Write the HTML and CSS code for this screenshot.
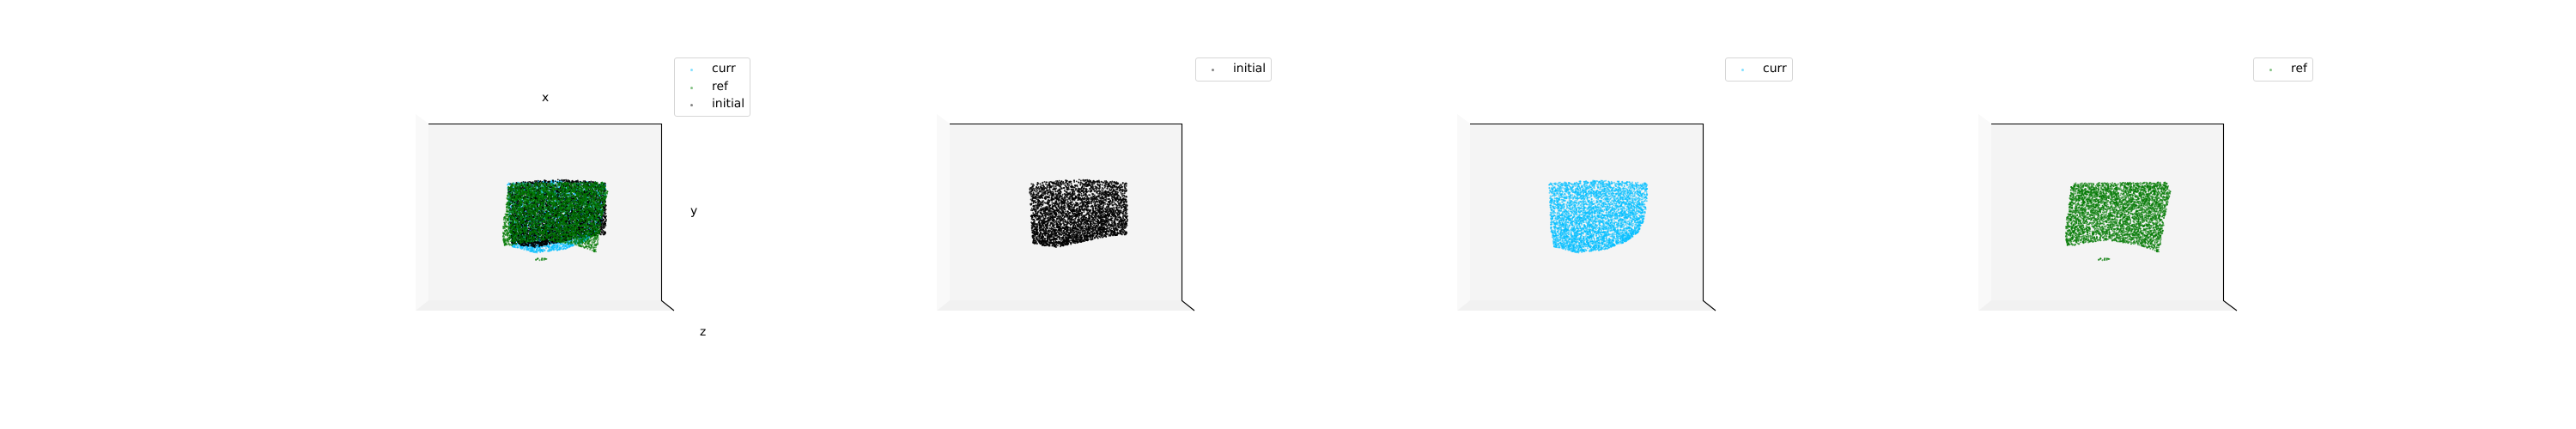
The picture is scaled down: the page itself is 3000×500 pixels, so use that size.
FILE: index.html
```html
<!DOCTYPE html>
<html lang="en">
<head>
<meta charset="utf-8">
<title>Point clouds</title>
<link rel="stylesheet" href="styles.css">
</head>
<body>
<main class="figure">
  <section class="panel">
    <svg class="axes" width="607" height="500" viewBox="0 0 607 500">
      <polygon class="wall-left" points="0,133 15,144 15,350 0,362"/>
      <polygon class="wall-back" points="15,144 287,144 287,350 15,350"/>
      <polygon class="wall-floor" points="15,350 287,350 301,362 0,362"/>
      <path class="axis-line" d="M15 144.5H286.5V350.5L301 362"/>
    </svg>
    <canvas class="cloud" width="607" height="500" data-series="curr initial ref"></canvas>
    <span class="axis-label label-x">x</span>
    <span class="axis-label label-y">y</span>
    <span class="axis-label label-z">z</span>
    <div class="legend legend-a">
      <div class="legend-row"><span class="marker marker-curr"></span>curr</div>
      <div class="legend-row"><span class="marker marker-ref"></span>ref</div>
      <div class="legend-row"><span class="marker marker-initial"></span>initial</div>
    </div>
  </section>
  <section class="panel panel-narrow">
    <svg class="axes" width="607" height="500" viewBox="0 0 607 500">
      <polygon class="wall-left" points="0,133 15,144 15,350 0,362"/>
      <polygon class="wall-back" points="15,144 286,144 286,350 15,350"/>
      <polygon class="wall-floor" points="15,350 286,350 300,362 0,362"/>
      <path class="axis-line" d="M15 144.5H285.5V350.5L300 362"/>
    </svg>
    <canvas class="cloud" width="607" height="500" data-series="initial"></canvas>
    <div class="legend legend-b">
      <div class="legend-row"><span class="marker marker-initial"></span>initial</div>
    </div>
  </section>
  <section class="panel">
    <svg class="axes" width="607" height="500" viewBox="0 0 607 500">
      <polygon class="wall-left" points="0,133 15,144 15,350 0,362"/>
      <polygon class="wall-back" points="15,144 287,144 287,350 15,350"/>
      <polygon class="wall-floor" points="15,350 287,350 301,362 0,362"/>
      <path class="axis-line" d="M15 144.5H286.5V350.5L301 362"/>
    </svg>
    <canvas class="cloud" width="607" height="500" data-series="curr"></canvas>
    <div class="legend legend-c">
      <div class="legend-row"><span class="marker marker-curr"></span>curr</div>
    </div>
  </section>
  <section class="panel">
    <svg class="axes" width="607" height="500" viewBox="0 0 607 500">
      <polygon class="wall-left" points="0,133 15,144 15,350 0,362"/>
      <polygon class="wall-back" points="15,144 286,144 286,350 15,350"/>
      <polygon class="wall-floor" points="15,350 286,350 301,362 0,362"/>
      <path class="axis-line" d="M15 144.5H285.5V350.5L301 362"/>
    </svg>
    <canvas class="cloud" width="607" height="500" data-series="ref"></canvas>
    <div class="legend legend-d">
      <div class="legend-row"><span class="marker marker-ref"></span>ref</div>
    </div>
  </section>
</main>
<script src="cloud.js"></script>
</body>
</html>
```
FILE: styles.css
```css
html, body {
  margin: 0;
  background: #fff;
}
.figure {
  display: flex;
  width: 3000px;
  height: 500px;
  padding-left: 484px;
  box-sizing: border-box;
  font-family: "DejaVu Sans", sans-serif;
  font-size: 13.9px;
  color: #000;
  text-rendering: geometricPrecision;
}
.panel {
  position: relative;
  flex: 0 0 607px;
  height: 500px;
}
.panel-narrow {
  flex-basis: 606px;
}
.axes, .cloud {
  position: absolute;
  left: 0;
  top: 0;
}
.cloud {
  filter: blur(0.45px);
}
.wall-left { fill: #f9f9f9; }
.wall-back { fill: #f4f4f4; }
.wall-floor { fill: #f1f1f1; }
.axis-line {
  fill: none;
  stroke: #000;
  stroke-width: 1.1;
}
.axis-label {
  position: absolute;
  line-height: 16px;
  will-change: transform;
}
.label-x { left: 147px; top: 106px; }
.label-y { left: 320px; top: 238px; }
.label-z { left: 331px; top: 379px; }
.legend {
  position: absolute;
  top: 67px;
  padding: 2px 6px 3px 0;
  border: 1px solid #d6d6d6;
  border-radius: 3px;
  background: #fff;
}
.legend-a { left: 301px; }
.legend-b { left: 301px; }
.legend-c { left: 312px; }
.legend-d { left: 320px; }
.legend-row {
  display: flex;
  align-items: center;
  height: 20.5px;
  white-space: nowrap;
  will-change: transform;
}
.marker {
  flex: none;
  width: 3px;
  height: 3px;
  margin: 2px 22px 0 18px;
  border-radius: 50%;
  opacity: 0.5;
}
.marker-curr { background: #00bfff; }
.marker-ref { background: #008000; }
.marker-initial { background: #000; }
```
FILE: cloud.js
```js
(function () {
  function rng(seed) {
    var s = seed >>> 0;
    return function () {
      s = (s + 0x6d2b79f5) >>> 0;
      var t = s;
      t = Math.imul(t ^ (t >>> 15), t | 1);
      t ^= t + Math.imul(t ^ (t >>> 7), t | 61);
      return ((t ^ (t >>> 14)) >>> 0) / 4294967296;
    };
  }
  function inside(p, x, y) {
    var c = false;
    for (var i = 0, j = p.length - 1; i < p.length; j = i++) {
      var a = p[i], b = p[j];
      if ((a[1] > y) !== (b[1] > y) && x < (b[0] - a[0]) * (y - a[1]) / (b[1] - a[1]) + a[0]) c = !c;
    }
    return c;
  }
  function toPanel(points, wall) {
    return points.map(function (q) {
      return [(q[0] - wall) / 3, 50 + q[1] / 3];
    });
  }
  function sample(poly, count, weight, seed) {
    var r = rng(seed), out = [], tries = 0;
    var xs = poly.map(function (p) { return p[0]; });
    var ys = poly.map(function (p) { return p[1]; });
    var x0 = Math.min.apply(null, xs), x1 = Math.max.apply(null, xs);
    var y0 = Math.min.apply(null, ys), y1 = Math.max.apply(null, ys);
    while (out.length < count && tries < count * 60) {
      tries++;
      var x = x0 + r() * (x1 - x0), y = y0 + r() * (y1 - y0);
      if (!inside(poly, x, y)) continue;
      if (r() > weight((x - x0) / (x1 - x0), (y - y0) / (y1 - y0))) continue;
      out.push([x, y]);
    }
    return out;
  }

  var initialShape = toPanel([[355,488],[430,482],[530,478],[640,483],[695,490],[699,610],[695,670],[640,675],[540,695],[450,716],[368,702],[360,600]], 32);
  var currShape = toPanel([[372,490],[540,480],[716,490],[715,560],[702,625],[682,665],[640,695],[570,722],[470,734],[388,712],[378,650]], 51);
  var refShape = toPanel([[380,490],[705,487],[713,520],[695,600],[685,670],[672,734],[620,712],[560,700],[485,690],[420,700],[353,712],[346,680],[350,620],[360,550],[365,505]], 42);
  var refBlip = toPanel([[461,752],[503,752],[503,760],[461,760]], 42);

  var series = {
    initial: {
      color: "#000000", radius: 0.95, alpha: 0.85,
      points: sample(initialShape, 4200, function (u, v) {
        return 0.45 + 0.55 * Math.pow(v, 1.3);
      }, 11)
    },
    curr: {
      color: "#00bfff", radius: 0.95, alpha: 0.62,
      points: sample(currShape, 4700, function (u, v) {
        var edge = (u + v) / 2;
        return Math.min(1, 0.45 + 0.25 * v + (edge > 0.76 ? 0.6 : 0));
      }, 23)
    },
    ref: {
      color: "#007a00", radius: 0.95, alpha: 0.66,
      points: sample(refShape, 4400, function (u, v) {
        return 0.7 + 0.3 * (1 - v);
      }, 37).concat(sample(refBlip, 16, function () { return 1; }, 41))
    }
  };

  document.querySelectorAll(".cloud").forEach(function (canvas) {
    var ctx = canvas.getContext("2d");
    canvas.dataset.series.split(" ").forEach(function (name) {
      var s = series[name];
      ctx.fillStyle = s.color;
      ctx.globalAlpha = s.alpha;
      s.points.forEach(function (p) {
        ctx.beginPath();
        ctx.arc(p[0], p[1], s.radius, 0, Math.PI * 2);
        ctx.fill();
      });
    });
  });
})();
```
